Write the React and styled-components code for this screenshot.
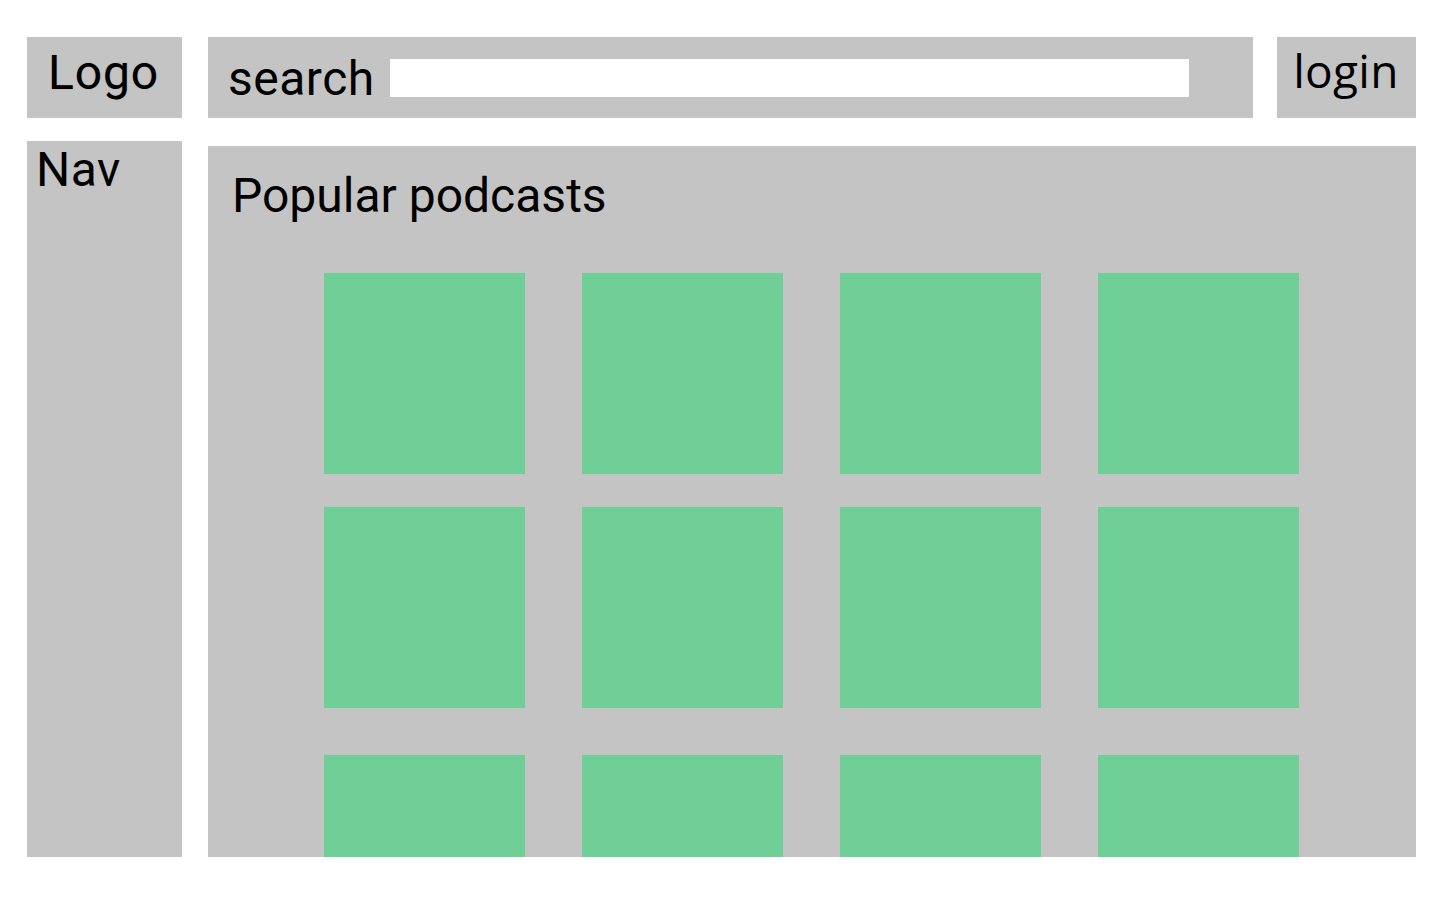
import React from "react";
import styled, { createGlobalStyle } from "styled-components";

const GlobalStyle = createGlobalStyle`
  html, body {
    margin: 0;
    padding: 0;
    background: #ffffff;
    font-family: Roboto, "Liberation Sans", sans-serif;
    color: #000000;
  }
  * { box-sizing: border-box; }
`;

const Page = styled.div`
  width: 1440px;
  height: 900px;
  padding: 37px 24px 0 27px;
  display: grid;
  grid-template-columns: 155px 1fr;
  grid-template-rows: 81px auto;
  column-gap: 26px;
  row-gap: 23px;
  overflow: hidden;
`;

const Panel = styled.div`
  background: #c4c4c4;
`;

const LogoBox = styled(Panel)`
  display: flex;
  justify-content: center;
  padding-top: 12px;
  padding-right: 2px;
  font-size: 48px;
  letter-spacing: 0.8px;
  line-height: 1;
  font-family: Roboto, sans-serif;
  text-shadow: 0 0 1px rgba(0, 0, 0, 0.35);
`;

const TopBar = styled.div`
  display: flex;
  gap: 24px;
`;

const SearchBox = styled(Panel)`
  flex: 1;
  display: flex;
  align-items: center;
  padding-left: 20px;
`;

const SearchLabel = styled.span`
  font-size: 48px;
  letter-spacing: 0.5px;
  line-height: 1;
  font-family: Roboto, sans-serif;
  padding-top: 2px;
`;

const SearchInput = styled.input`
  width: 799px;
  height: 38px;
  margin-left: 15px;
  border: none;
  outline: none;
  background: #ffffff;
  padding: 0 8px;
  font-family: Roboto, sans-serif;
  font-size: 20px;
`;

const LoginBox = styled(Panel)`
  width: 139px;
  display: flex;
  justify-content: center;
  padding-top: 10px;
  padding-right: 1px;
  font-family: "Open Sans", sans-serif;
  font-size: 46px;
  letter-spacing: 0.3px;
  line-height: 1;
`;

const Nav = styled(Panel)`
  height: 716px;
  padding: 0 0 0 9px;
  font-size: 48px;
  letter-spacing: 0.5px;
  line-height: normal;
  font-family: Roboto, sans-serif;
`;

const Main = styled(Panel)`
  margin-top: 5px;
  height: 711px;
  overflow: hidden;
  padding: 21px 21px 0 24px;
`;

const Title = styled.h2`
  margin: 0;
  font-size: 48px;
  font-weight: 400;
  line-height: normal;
  font-family: Roboto, sans-serif;
`;

const Tiles = styled.div`
  margin-top: 49px;
  margin-left: -5px;
  display: flex;
  flex-direction: column;
  align-items: center;
`;

const TileRow = styled.div`
  display: flex;
  gap: 57px;
  margin-top: ${(p) => p.$gap || 0}px;
`;

const Tile = styled.div`
  width: 201px;
  height: 201px;
  background: #6fcf97;
`;

const rows = [0, 33, 47];

export default function App() {
  return (
    <>
      <GlobalStyle />
      <Page>
        <LogoBox>Logo</LogoBox>
        <TopBar>
          <SearchBox>
            <SearchLabel>search</SearchLabel>
            <SearchInput type="text" aria-label="search" />
          </SearchBox>
          <LoginBox>login</LoginBox>
        </TopBar>
        <Nav>Nav</Nav>
        <Main>
          <Title>Popular podcasts</Title>
          <Tiles>
            {rows.map((g, r) => (
              <TileRow key={r} $gap={g}>
                {[0, 1, 2, 3].map((c) => (
                  <Tile key={c} />
                ))}
              </TileRow>
            ))}
          </Tiles>
        </Main>
      </Page>
    </>
  );
}
